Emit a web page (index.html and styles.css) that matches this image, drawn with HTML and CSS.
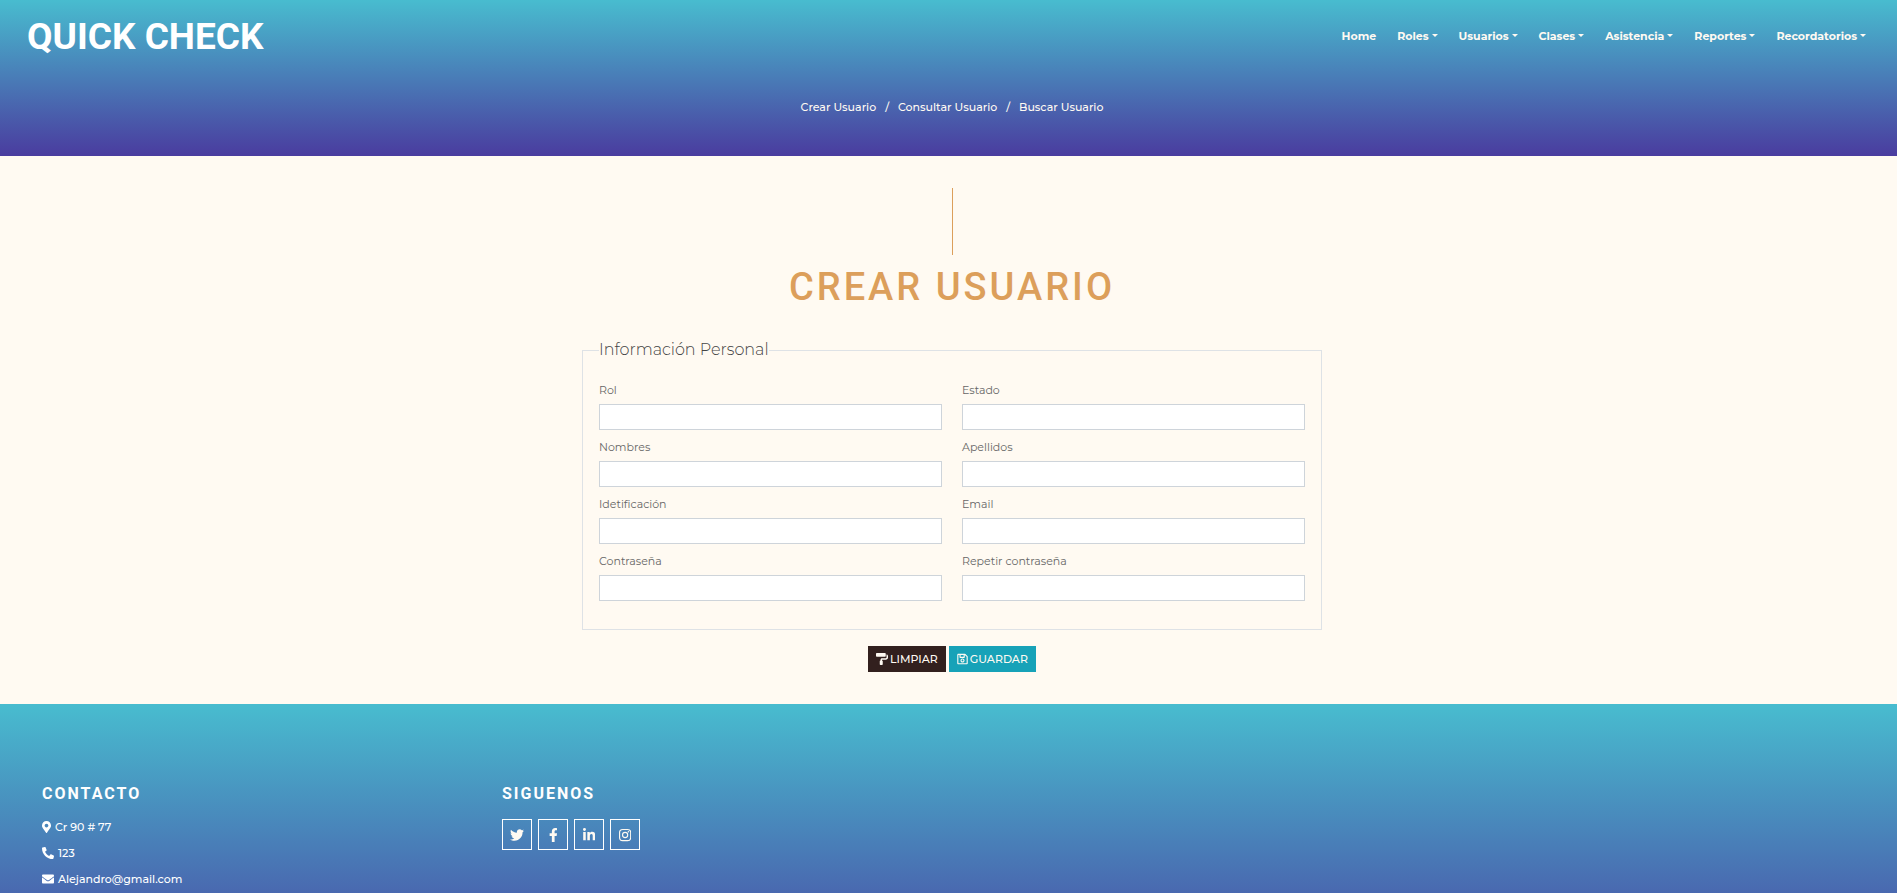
FILE: index.html
```html
<!DOCTYPE html>
<html lang="es">
<head>
<meta charset="utf-8">
<meta name="viewport" content="width=device-width, initial-scale=1">
<title>Quick Check - Crear Usuario</title>
<link rel="stylesheet" href="styles.css">
</head>
<body>
<header class="header">
  <div class="topbar">
    <a class="logo" href="#">QUICK CHECK</a>
    <nav class="nav">
      <a class="nav-link" href="#">Home</a>
      <a class="nav-link dropdown" href="#">Roles</a>
      <a class="nav-link dropdown" href="#">Usuarios</a>
      <a class="nav-link dropdown" href="#">Clases</a>
      <a class="nav-link dropdown" href="#">Asistencia</a>
      <a class="nav-link dropdown" href="#">Reportes</a>
      <a class="nav-link dropdown" href="#">Recordatorios</a>
    </nav>
  </div>
  <nav class="breadcrumb">
    <a href="#">Crear Usuario</a><span>/</span><a href="#">Consultar Usuario</a><span>/</span><a href="#">Buscar Usuario</a>
  </nav>
</header>

<main class="main">
  <div class="divider"></div>
  <h1 class="title">CREAR USUARIO</h1>
  <form class="form">
    <fieldset class="fieldset">
      <legend class="legend">Información Personal</legend>
      <div class="fields">
        <div class="field"><label for="rol">Rol</label><input id="rol" type="text"></div>
        <div class="field"><label for="estado">Estado</label><input id="estado" type="text"></div>
        <div class="field"><label for="nombres">Nombres</label><input id="nombres" type="text"></div>
        <div class="field"><label for="apellidos">Apellidos</label><input id="apellidos" type="text"></div>
        <div class="field"><label for="identificacion">Idetificación</label><input id="identificacion" type="text"></div>
        <div class="field"><label for="email">Email</label><input id="email" type="email"></div>
        <div class="field"><label for="clave">Contraseña</label><input id="clave" type="password"></div>
        <div class="field"><label for="clave2">Repetir contraseña</label><input id="clave2" type="password"></div>
      </div>
    </fieldset>
    <div class="actions">
      <button class="btn btn-dark" type="reset"><svg class="icon" viewBox="0 0 512 512"><path d="M416 128V32c0-17.670-14.330-32-32-32H32C14.330 0 0 14.330 0 32v96c0 17.670 14.330 32 32 32h352c17.670 0 32-14.330 32-32zm32-64v128c0 17.670-14.330 32-32 32H256c-35.350 0-64 28.650-64 64v32c-17.670 0-32 14.330-32 32v128c0 17.670 14.330 32 32 32h64c17.670 0 32-14.330 32-32V352c0-17.670-14.330-32-32-32v-32h160c53.020 0 96-42.980 96-96v-64c0-35.350-28.650-64-64-64z"/></svg>LIMPIAR</button>
      <button class="btn btn-info" type="submit"><svg class="icon icon-save" viewBox="0 0 448 512"><path d="M433.941 129.941l-83.882-83.882A48 48 0 0 0 316.118 32H48C21.490 32 0 53.490 0 80v352c0 26.510 21.490 48 48 48h352c26.510 0 48-21.490 48-48V163.882a48 48 0 0 0-14.059-33.941zM272 80v80H144V80h128zm122 352H54a6 6 0 0 1-6-6V86a6 6 0 0 1 6-6h42v104c0 13.255 10.745 24 24 24h176c13.255 0 24-10.745 24-24V83.882l78.243 78.243a6 6 0 0 1 1.757 4.243V426a6 6 0 0 1-6 6zM224 232c-48.523 0-88 39.477-88 88s39.477 88 88 88 88-39.477 88-88-39.477-88-88-88zm0 128c-22.056 0-40-17.944-40-40s17.944-40 40-40 40 17.944 40 40-17.944 40-40 40z"/></svg>GUARDAR</button>
    </div>
  </form>
</main>

<footer class="footer">
  <section>
    <h2 class="footer-title">CONTACTO</h2>
    <ul class="contact">
      <li><svg class="icon icon-pin" viewBox="0 0 384 512"><path d="M172.268 501.670C26.970 291.031 0 269.413 0 192 0 85.961 85.961 0 192 0s192 85.961 192 192c0 77.413-26.970 99.031-172.268 309.670-9.535 13.774-29.930 13.773-39.464 0zM192 272c44.183 0 80-35.817 80-80s-35.817-80-80-80-80 35.817-80 80 35.817 80 80 80z"/></svg>Cr 90 # 77</li>
      <li><svg class="icon" viewBox="0 0 512 512"><path d="M493.400 24.600l-104-24c-11.300-2.600-22.900 3.300-27.500 13.900l-48 112c-4.200 9.800-1.400 21.300 6.900 28l60.600 49.600c-36 76.700-98.900 140.500-177.200 177.200l-49.600-60.600c-6.800-8.300-18.200-11.100-28-6.900l-112 48C3.900 366.500-2 378.100.6 389.400l24 104C27.100 504.200 36.700 512 48 512c256.100 0 464-207.500 464-464 0-11.200-7.700-20.900-18.600-23.400z" transform="matrix(-1 0 0 1 512 0)"/></svg>123</li>
      <li><svg class="icon" viewBox="0 0 512 512"><path d="M502.300 190.800c3.900-3.100 9.700-.2 9.700 4.700V400c0 26.500-21.500 48-48 48H48c-26.500 0-48-21.500-48-48V195.600c0-5 5.700-7.800 9.700-4.700 22.400 17.400 52.100 39.500 154.100 113.600 21.100 15.400 56.700 47.800 92.200 47.600 35.700.3 72-32.800 92.300-47.600 102-74.100 131.600-96.300 154-113.700zM256 320c23.200.4 56.600-29.200 73.400-41.400 132.700-96.300 142.800-104.700 173.400-128.700 5.800-4.500 9.200-11.500 9.200-18.900v-19c0-26.500-21.500-48-48-48H48c-26.500 0-48 21.500-48 48v19c0 7.400 3.400 14.300 9.200 18.900 30.600 23.900 40.700 32.400 173.400 128.700 16.800 12.200 50.200 41.800 73.400 41.400z"/></svg>Alejandro@gmail.com</li>
    </ul>
  </section>
  <section>
    <h2 class="footer-title">SIGUENOS</h2>
    <div class="social">
      <a href="#" aria-label="Twitter"><svg viewBox="0 0 512 512"><path d="M459.370 151.716c.325 4.548.325 9.097.325 13.645 0 138.720-105.583 298.558-298.558 298.558-59.452 0-114.680-17.219-161.137-47.106 8.447.974 16.568 1.299 25.340 1.299 49.055 0 94.213-16.568 130.274-44.832-46.132-.975-84.792-31.188-98.112-72.772 6.498.974 12.995 1.624 19.818 1.624 9.421 0 18.843-1.300 27.614-3.573-48.081-9.747-84.143-51.980-84.143-102.985v-1.299c13.969 7.797 30.214 12.670 47.431 13.319-28.264-18.843-46.781-51.005-46.781-87.391 0-19.492 5.197-37.360 14.294-52.954 51.655 63.675 129.300 105.258 216.365 109.807-1.624-7.797-2.599-15.918-2.599-24.040 0-57.828 46.782-104.934 104.934-104.934 30.213 0 57.502 12.670 76.670 33.137 23.715-4.548 46.456-13.320 66.599-25.340-7.798 24.366-24.366 44.833-46.132 57.827 21.117-2.273 41.584-8.122 60.426-16.243-14.292 20.791-32.161 39.308-52.628 54.253z"/></svg></a>
      <a href="#" aria-label="Facebook"><svg viewBox="0 0 320 512"><path d="M279.140 288l14.220-92.660h-88.910v-60.130c0-25.350 12.420-50.060 52.240-50.060h40.420V6.260S260.430 0 225.360 0c-73.220 0-121.080 44.380-121.080 124.720v70.620H22.890V288h81.390v224h100.170V288z"/></svg></a>
      <a href="#" aria-label="LinkedIn"><svg viewBox="0 0 448 512"><path d="M100.280 448H7.400V148.900h92.880zM53.790 108.100C24.090 108.100 0 83.500 0 53.800a53.790 53.790 0 0 1 107.580 0c0 29.700-24.100 54.300-53.790 54.300zM447.900 448h-92.680V302.400c0-34.700-.7-79.200-48.290-79.200-48.290 0-55.690 37.700-55.690 76.700V448h-92.780V148.900h89.080v40.800h1.300c12.400-23.500 42.690-48.300 87.880-48.300 94 0 111.280 61.900 111.280 142.300V448z"/></svg></a>
      <a href="#" aria-label="Instagram"><svg viewBox="0 0 448 512"><path fill-rule="evenodd" d="M132 32h184a132 132 0 0 1 132 132v184a132 132 0 0 1-132 132H132A132 132 0 0 1 0 348V164A132 132 0 0 1 132 32zm4 40a94 94 0 0 0-94 94v180a94 94 0 0 0 94 94h176a94 94 0 0 0 94-94V166a94 94 0 0 0-94-94zM224 141a115 115 0 1 1 0 230 115 115 0 0 1 0-230zm0 40a75 75 0 1 0 0 150 75 75 0 0 0 0-150zM344 109a27 27 0 1 1 0 54 27 27 0 0 1 0-54z"/></svg></a>
    </div>
  </section>
</footer>
</body>
</html>
```
FILE: styles.css
```css
* {
  box-sizing: border-box;
}

body {
  margin: 0;
  background: #fffaf2;
  color: #666;
  font-family: Montserrat, Inter, "Open Sans", sans-serif;
  font-size: 11px;
  line-height: 16px;
}

a {
  color: inherit;
  text-decoration: none;
}

.icon {
  width: 12px;
  height: 12px;
  fill: currentColor;
}

/* Header */
.header {
  background: linear-gradient(#48bccf, #4a3c9f);
  color: #fff;
  padding-bottom: 41px;
}

.topbar {
  display: flex;
  align-items: center;
  justify-content: space-between;
  height: 72px;
  padding: 0 31px 0 27px;
}

.logo {
  padding-top: 2px;
  font: 700 37px/44px Roboto, sans-serif;
}

.nav {
  display: flex;
  gap: 21px;
  color: #fffaf2;
  font-weight: 700;
}

.dropdown::after {
  content: "";
  display: inline-block;
  margin-left: 3px;
  vertical-align: 3px;
  border: 3px solid transparent;
  border-top-color: currentColor;
  border-bottom: 0;
}

.breadcrumb {
  display: flex;
  justify-content: center;
  gap: 9px;
  padding: 27px 0 0 7px;
  color: #fffaf2;
  font-weight: 500;
}

/* Form */
.main {
  display: flex;
  flex-direction: column;
  align-items: center;
  padding: 32px 0 32px 7px;
}

.divider {
  width: 1px;
  height: 67px;
  background: #dc9f5b;
}

.title {
  margin: 8px 0 27px;
  color: #dc9f5b;
  font: 500 38px/48px Roboto, sans-serif;
  letter-spacing: 3px;
}

.form {
  width: 100%;
  max-width: 740px;
}

.fieldset {
  margin: 0;
  padding: 20px 16px 28px;
  border: 1px solid #dee2e6;
}

.legend {
  padding: 0;
  color: #444;
  font-size: 16px;
  font-weight: 300;
  line-height: 24px;
}

.fields {
  display: grid;
  grid-template-columns: 1fr 1fr;
  gap: 9px 20px;
}

.field {
  display: flex;
  flex-direction: column;
  gap: 6px;
}

.field input {
  width: 100%;
  height: 26px;
  padding: 4px 8px;
  border: 1px solid #ced4da;
  background: #fff;
  font: inherit;
}

.actions {
  display: flex;
  justify-content: center;
  gap: 3px;
  margin-top: 16px;
}

.btn {
  display: flex;
  align-items: center;
  gap: 2px;
  height: 26px;
  padding: 0 8px;
  border: 0;
  color: #fffaf2;
  font: inherit;
  font-weight: 500;
}

.btn-dark {
  background: #32201e;
}

.btn-info {
  background: #17a2b8;
}

.icon-save {
  width: 11px;
}

/* Footer */
.footer {
  display: grid;
  grid-template-columns: repeat(4, 1fr);
  min-height: 290px;
  padding: 79px 15px 78px 42px;
  background: linear-gradient(#48bccf, #4a3c9f);
  color: #fff;
}

.footer-title {
  margin: 0 0 14px;
  font: 700 16px/22px Roboto, sans-serif;
  letter-spacing: 2px;
}

.contact {
  display: grid;
  gap: 10px;
  margin: 0;
  padding: 0;
  list-style: none;
  font-weight: 500;
}

.contact li {
  display: flex;
  align-items: center;
  gap: 4px;
}

.icon-pin {
  width: 9px;
}

.social {
  display: flex;
  gap: 6px;
}

.social a {
  display: flex;
  align-items: center;
  justify-content: center;
  width: 30px;
  height: 31px;
  border: 1px solid #fff;
}

.social svg {
  height: 14px;
  fill: #fffaf2;
}
```
